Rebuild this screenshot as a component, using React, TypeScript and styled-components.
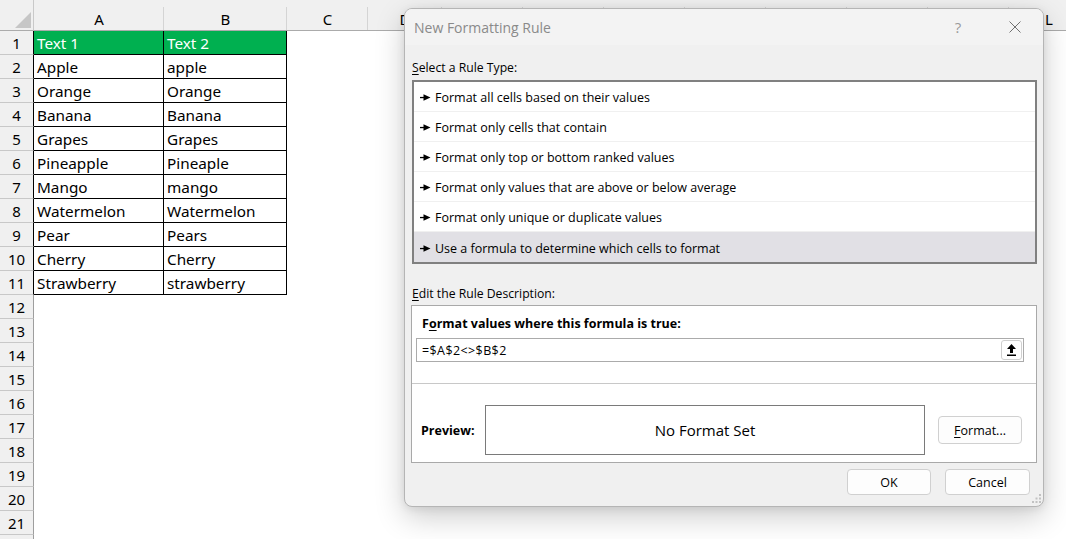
import styled, { createGlobalStyle } from 'styled-components';

const GlobalStyle = createGlobalStyle`
  html, body {
    margin: 0;
    padding: 0;
    background: #ffffff;
    overflow: hidden;
  }
  #root {
    position: relative;
    width: 1066px;
    height: 539px;
    overflow: hidden;
  }
`;

const columns = ['A', 'B', 'C', 'D', 'E', 'F', 'G', 'H', 'I', 'J', 'K', 'L'];

const data: [string, string][] = [
  ['Text 1', 'Text 2'],
  ['Apple', 'apple'],
  ['Orange', 'Orange'],
  ['Banana', 'Banana'],
  ['Grapes', 'Grapes'],
  ['Pineapple', 'Pineaple'],
  ['Mango', 'mango'],
  ['Watermelon', 'Watermelon'],
  ['Pear', 'Pears'],
  ['Cherry', 'Cherry'],
  ['Strawberry', 'strawberry'],
];

const ruleTypes = [
  'Format all cells based on their values',
  'Format only cells that contain',
  'Format only top or bottom ranked values',
  'Format only values that are above or below average',
  'Format only unique or duplicate values',
  'Use a formula to determine which cells to format',
];

const sheetFont = `"Noto Sans", "Open Sans", sans-serif`;
const uiFont = `"Open Sans", "Noto Sans", sans-serif`;

const Sheet = styled.div`
  display: grid;
  grid-template-columns: 34px 130px 123px 81px 74px repeat(7, 81px) 80px;
  grid-template-rows: 31px;
  grid-auto-rows: 24px;
  font-family: ${sheetFont};
  font-size: 15.3px;
  color: #000;
`;

const Corner = styled.div`
  box-sizing: border-box;
  background: #f0f0f0;
  border-right: 1px solid #c9c9c9;
  border-bottom: 1px solid #ababab;
  display: flex;
  align-items: flex-end;
  justify-content: flex-end;
  padding: 0 2px 2px 0;
`;

const ColHead = styled.div`
  position: relative;
  box-sizing: border-box;
  background: #f0f0f0;
  border-bottom: 1px solid #ababab;
  display: flex;
  align-items: center;
  justify-content: center;
  padding-top: 8px;
  font-size: 15px;
  &::after {
    content: '';
    position: absolute;
    right: 0;
    top: 7px;
    bottom: 0;
    width: 1px;
    background: #d4d4d4;
  }
`;

const RowHead = styled.div<{ $inTable: boolean }>`
  box-sizing: border-box;
  background: #f0f0f0;
  border-bottom: 1px solid #c8c8c8;
  border-right: 1px solid ${(p) => (p.$inTable ? '#000' : '#9e9e9e')};
  display: flex;
  align-items: center;
  justify-content: center;
  font-size: 15px;
`;

const Cell = styled.div<{ $head?: boolean }>`
  box-sizing: border-box;
  border-right: 1px solid #000;
  border-bottom: 1px solid #000;
  background: ${(p) => (p.$head ? '#00b050' : '#fff')};
  color: ${(p) => (p.$head ? '#fff' : '#000')};
  padding-left: 3px;
  display: flex;
  align-items: center;
  white-space: nowrap;
  overflow: hidden;
`;

const Filler = styled.div<{ $span: number }>`
  grid-column: span ${(p) => p.$span};
  background: #fff;
`;

const Dialog = styled.div`
  position: absolute;
  left: 404px;
  top: 8px;
  width: 640px;
  height: 499px;
  box-sizing: border-box;
  border: 1px solid #b5b5b5;
  border-radius: 8px;
  background: #f0f0f0;
  box-shadow: 0 10px 30px rgba(0, 0, 0, 0.2), 0 2px 8px rgba(0, 0, 0, 0.08);
  display: flex;
  flex-direction: column;
  overflow: hidden;
  font-family: ${uiFont};
  font-size: 12.5px;
  color: #000;
`;

const TitleBar = styled.div`
  height: 36px;
  background: #f3f3f3;
  display: flex;
  align-items: center;
  padding: 0 5px 0 9px;
  gap: 11px;
`;

const Title = styled.div`
  flex: 1;
  font-size: 14px;
  color: #8a8a8a;
`;

const TitleButton = styled.div`
  width: 46px;
  height: 30px;
  display: flex;
  align-items: center;
  justify-content: center;
  color: #9a9a9a;
  font-size: 15px;
`;

const Body = styled.div`
  flex: 1;
  display: flex;
  flex-direction: column;
  padding: 0 6px 0 7px;
`;

const SectionLabel = styled.div<{ $top: number }>`
  margin-top: ${(p) => p.$top}px;
  line-height: 15px;
  height: 15px;
  font-size: 12.2px;
`;

const Key = styled.span`
  text-decoration: underline;
  text-underline-offset: 2px;
`;

const RuleList = styled.div`
  margin-top: 5px;
  height: 184px;
  box-sizing: border-box;
  border: 2px solid #808080;
  background: #fff;
  display: flex;
  flex-direction: column;
`;

const RuleItem = styled.div<{ $selected: boolean }>`
  height: 30px;
  box-sizing: border-box;
  border-bottom: 1px solid #f0f0f0;
  background: ${(p) => (p.$selected ? '#e1e0e5' : '#fff')};
  display: flex;
  align-items: center;
  gap: 4px;
  padding: 2px 0 0 6px;
  &:last-child {
    border-bottom: none;
  }
`;

const DescBox = styled.div`
  margin: 4px 0 0 -1px;
  height: 158px;
  box-sizing: border-box;
  border: 1px solid #a9a9a9;
  background: #fff;
  display: flex;
  flex-direction: column;
`;

const FormulaLabel = styled.div`
  padding: 10px 0 0 10px;
  line-height: 15px;
  font-weight: 700;
`;

const FormulaInput = styled.div`
  margin: 7px 12px 0 4px;
  height: 24px;
  box-sizing: border-box;
  border: 1px solid #ababab;
  display: flex;
  align-items: center;
  padding: 0 1px 0 5px;
  font-size: 12.5px;
  letter-spacing: 0.4px;
`;

const InputText = styled.div`
  flex: 1;
  padding-top: 1px;
`;

const CollapseButton = styled.div`
  width: 21px;
  height: 20px;
  box-sizing: border-box;
  border: 1px solid #cfcfcf;
  border-radius: 3px;
  display: flex;
  align-items: center;
  justify-content: center;
`;

const Separator = styled.div`
  margin-top: 21px;
  height: 1px;
  background: #c8c8c8;
`;

const PreviewRow = styled.div`
  margin-top: 21px;
  height: 50px;
  display: flex;
  align-items: center;
`;

const PreviewLabel = styled.div`
  width: 73px;
  box-sizing: border-box;
  padding-left: 9px;
  font-weight: 700;
`;

const PreviewBox = styled.div`
  width: 440px;
  height: 50px;
  box-sizing: border-box;
  border: 1px solid #7a7a7a;
  display: flex;
  align-items: center;
  justify-content: center;
  font-size: 15px;
`;

const Button = styled.div<{ $w: number }>`
  width: ${(p) => p.$w}px;
  height: 26px;
  box-sizing: border-box;
  border: 1px solid #d0d0d0;
  border-radius: 4px;
  background: #fdfdfd;
  display: flex;
  align-items: center;
  justify-content: center;
`;

const FormatButton = styled(Button)`
  margin-left: 13px;
  height: 28px;
`;

const ButtonRow = styled.div`
  margin-top: 6px;
  display: flex;
  justify-content: flex-end;
  gap: 14px;
  padding-right: 7px;
`;

const Grip = styled.svg`
  position: absolute;
  right: 2px;
  bottom: 3px;
`;

const RuleArrow = () => (
  <svg width="11" height="7" viewBox="0 0 11 7">
    <rect x="0" y="2.9" width="4" height="1.3" fill="#000" />
    <polygon points="3.5,0.3 10.5,3.5 3.5,6.7" fill="#000" />
  </svg>
);

const UpArrow = () => (
  <svg width="9" height="12" viewBox="0 0 9 12">
    <polygon points="4.5,0 9,5 6,5 6,9 3,9 3,5 0,5" fill="#000" />
    <rect x="0" y="10.5" width="9" height="1.5" fill="#000" />
  </svg>
);

const CloseIcon = () => (
  <svg width="12" height="12" viewBox="0 0 12 12">
    <path d="M0.5 0.5 L11.5 11.5 M11.5 0.5 L0.5 11.5" stroke="#707070" strokeWidth="1" />
  </svg>
);

const CornerTriangle = () => (
  <svg width="16" height="16" viewBox="0 0 16 16">
    <polygon points="16,0 16,16 0,16" fill="#c6c6c6" />
  </svg>
);

export default function App() {
  const rows = Array.from({ length: 22 }, (_, i) => i + 1);
  return (
    <>
      <GlobalStyle />
      <Sheet>
        <Corner>
          <CornerTriangle />
        </Corner>
        {columns.map((c) => (
          <ColHead key={c}>{c}</ColHead>
        ))}
        {rows.map((r) => {
          const row = data[r - 1];
          return [
            <RowHead key={`h${r}`} $inTable={!!row}>
              {r}
            </RowHead>,
            row ? (
              [
                <Cell key={`a${r}`} $head={r === 1}>
                  {row[0]}
                </Cell>,
                <Cell key={`b${r}`} $head={r === 1}>
                  {row[1]}
                </Cell>,
                <Filler key={`f${r}`} $span={10} />,
              ]
            ) : (
              <Filler key={`f${r}`} $span={12} />
            ),
          ];
        })}
      </Sheet>

      <Dialog>
        <TitleBar>
          <Title>New Formatting Rule</Title>
          <TitleButton>?</TitleButton>
          <TitleButton>
            <CloseIcon />
          </TitleButton>
        </TitleBar>
        <Body>
          <SectionLabel $top={15}>
            <Key>S</Key>elect a Rule Type:
          </SectionLabel>
          <RuleList>
            {ruleTypes.map((t, i) => (
              <RuleItem key={t} $selected={i === ruleTypes.length - 1}>
                <RuleArrow />
                {t}
              </RuleItem>
            ))}
          </RuleList>
          <SectionLabel $top={22}>
            <Key>E</Key>dit the Rule Description:
          </SectionLabel>
          <DescBox>
            <FormulaLabel>
              F<Key>o</Key>rmat values where this formula is true:
            </FormulaLabel>
            <FormulaInput>
              <InputText>=$A$2&lt;&gt;$B$2</InputText>
              <CollapseButton>
                <UpArrow />
              </CollapseButton>
            </FormulaInput>
            <Separator />
            <PreviewRow>
              <PreviewLabel>Preview:</PreviewLabel>
              <PreviewBox>No Format Set</PreviewBox>
              <FormatButton $w={84}>
                <span>
                  <Key>F</Key>ormat...
                </span>
              </FormatButton>
            </PreviewRow>
          </DescBox>
          <ButtonRow>
            <Button $w={84}>OK</Button>
            <Button $w={85}>Cancel</Button>
          </ButtonRow>
        </Body>
        <Grip width="9" height="9" viewBox="0 0 9 9">
          <rect x="7" y="0" width="2" height="2" fill="#c2c2c2" />
          <rect x="7" y="3.5" width="2" height="2" fill="#c2c2c2" />
          <rect x="3.5" y="3.5" width="2" height="2" fill="#c2c2c2" />
          <rect x="7" y="7" width="2" height="2" fill="#c2c2c2" />
          <rect x="3.5" y="7" width="2" height="2" fill="#c2c2c2" />
          <rect x="0" y="7" width="2" height="2" fill="#c2c2c2" />
        </Grip>
      </Dialog>
    </>
  );
}
